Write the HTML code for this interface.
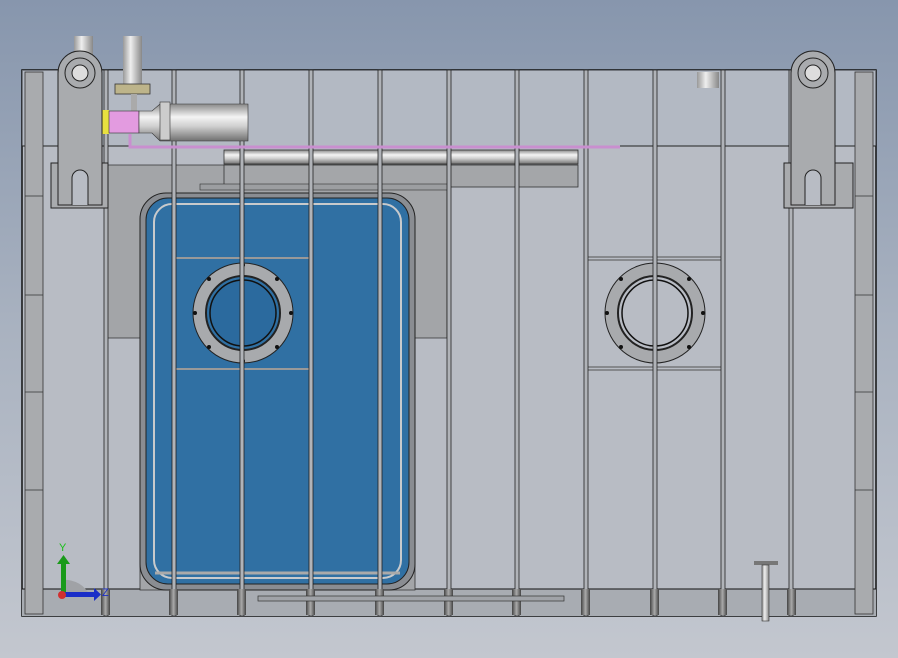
<!DOCTYPE html>
<html><head><style>
html,body{margin:0;padding:0;width:898px;height:658px;overflow:hidden}
</style></head><body>
<svg width="898" height="658" viewBox="0 0 898 658" xmlns="http://www.w3.org/2000/svg">
<defs>
<linearGradient id="bg" x1="0" y1="0" x2="0" y2="1">
<stop offset="0" stop-color="#8796ad"/><stop offset="0.5" stop-color="#a9b2c0"/><stop offset="1" stop-color="#c3c7cf"/>
</linearGradient>
<linearGradient id="cyl" x1="0" y1="0" x2="0" y2="1">
<stop offset="0" stop-color="#8a8a8a"/><stop offset="0.35" stop-color="#f4f4f4"/><stop offset="0.6" stop-color="#d0d0d0"/><stop offset="1" stop-color="#707070"/>
</linearGradient>
<linearGradient id="cylv" x1="0" y1="0" x2="1" y2="0">
<stop offset="0" stop-color="#999"/><stop offset="0.4" stop-color="#eee"/><stop offset="1" stop-color="#888"/>
</linearGradient>
<linearGradient id="post" x1="0" y1="0" x2="1" y2="0">
<stop offset="0" stop-color="#444"/><stop offset="0.5" stop-color="#aaa"/><stop offset="1" stop-color="#444"/>
</linearGradient>
</defs>
<rect width="898" height="658" fill="url(#bg)"/>
<rect x="22" y="70" width="854" height="546" fill="#b8bcc4" stroke="#111" stroke-width="1.5"/>
<rect x="22" y="70" width="854" height="76" fill="#adb5c2" opacity="0.5"/>
<line x1="22" y1="146" x2="876" y2="146" stroke="#222"/>
<rect x="22" y="589" width="854" height="27" fill="#a8acb2"/>
<line x1="22" y1="589" x2="876" y2="589" stroke="#111"/>
<rect x="25" y="72" width="18" height="542" fill="#a9abae" stroke="#333" stroke-width="0.8"/>
<rect x="855" y="72" width="18" height="542" fill="#a9abae" stroke="#333" stroke-width="0.8"/>
<g stroke="#333" stroke-width="0.8">
<line x1="25" y1="196" x2="43" y2="196"/><line x1="25" y1="295" x2="43" y2="295"/><line x1="25" y1="392" x2="43" y2="392"/><line x1="25" y1="490" x2="43" y2="490"/>
<line x1="855" y1="196" x2="873" y2="196"/><line x1="855" y1="295" x2="873" y2="295"/><line x1="855" y1="392" x2="873" y2="392"/><line x1="855" y1="490" x2="873" y2="490"/>
</g>
<path d="M106 165 H447 V338 H415 V590 H140 V338 H106 Z" fill="#a3a5a8" stroke="#333" stroke-width="0.8"/>
<rect x="224" y="150" width="354" height="14" fill="url(#cyl)" stroke="#333" stroke-width="0.8"/>
<rect x="224" y="165" width="354" height="22" fill="#a4a6a9" stroke="#333" stroke-width="0.8"/>
<rect x="200" y="184" width="250" height="6" fill="#9c9ea1" stroke="#333" stroke-width="0.6"/>
<rect x="140" y="193" width="275" height="397" rx="26" fill="#8a8d92" stroke="#222"/>
<rect x="146" y="198" width="263" height="386" rx="22" fill="#3070a3" stroke="#222"/>
<rect x="154" y="204" width="247" height="374" rx="18" fill="none" stroke="#c8cacc" stroke-width="2"/>
<rect x="174" y="258" width="137" height="111" fill="none" stroke="#999" stroke-width="2"/>
<line x1="155" y1="573" x2="400" y2="573" stroke="#aaa" stroke-width="3"/>
<circle cx="243" cy="313" r="50" fill="#a8aaad" stroke="#222"/>
<circle cx="243" cy="313" r="37" fill="#3070a3" stroke="#222" stroke-width="2"/>
<circle cx="243" cy="313" r="33" fill="#2b6a9e" stroke="#111" stroke-width="1.5"/>
<circle cx="655" cy="313" r="50" fill="#a8aaad" stroke="#222"/>
<circle cx="655" cy="313" r="37" fill="#b8bcc4" stroke="#222" stroke-width="2"/>
<circle cx="655" cy="313" r="33" fill="#b8bcc4" stroke="#111" stroke-width="1.5"/>
<g fill="#111">
<circle cx="243" cy="265" r="2"/><circle cx="243" cy="361" r="2"/><circle cx="195" cy="313" r="2"/><circle cx="291" cy="313" r="2"/>
<circle cx="209" cy="279" r="2"/><circle cx="277" cy="279" r="2"/><circle cx="209" cy="347" r="2"/><circle cx="277" cy="347" r="2"/>
<circle cx="655" cy="265" r="2"/><circle cx="655" cy="361" r="2"/><circle cx="607" cy="313" r="2"/><circle cx="703" cy="313" r="2"/>
<circle cx="621" cy="279" r="2"/><circle cx="689" cy="279" r="2"/><circle cx="621" cy="347" r="2"/><circle cx="689" cy="347" r="2"/>
</g>
<g stroke="#555" stroke-width="1"><line x1="586" y1="257" x2="723" y2="257"/><line x1="586" y1="260" x2="723" y2="260"/>
<line x1="586" y1="367" x2="723" y2="367"/><line x1="586" y1="370" x2="723" y2="370"/></g>
<g fill="#b0b3b8" stroke="#222" stroke-width="0.8">
<rect x="104" y="70" width="4" height="546"/><rect x="172" y="70" width="4" height="546"/><rect x="240" y="70" width="4" height="546"/>
<rect x="309" y="70" width="4" height="546"/><rect x="378" y="70" width="4" height="546"/><rect x="447" y="70" width="4" height="546"/>
<rect x="515" y="70" width="4" height="546"/><rect x="584" y="70" width="4" height="546"/><rect x="653" y="70" width="4" height="546"/>
<rect x="721" y="70" width="4" height="546"/><rect x="789" y="70" width="4" height="546"/>
</g>
<g fill="url(#post)">
<rect x="101" y="589" width="9" height="26"/><rect x="169" y="589" width="9" height="26"/><rect x="237" y="589" width="9" height="26"/>
<rect x="306" y="589" width="9" height="26"/><rect x="375" y="589" width="9" height="26"/><rect x="444" y="589" width="9" height="26"/>
<rect x="512" y="589" width="9" height="26"/><rect x="581" y="589" width="9" height="26"/><rect x="650" y="589" width="9" height="26"/>
<rect x="718" y="589" width="9" height="26"/><rect x="787" y="589" width="9" height="26"/>
</g>
<rect x="258" y="596" width="306" height="5" fill="#a0a3a8" stroke="#333" stroke-width="0.7"/>
<rect x="754" y="561" width="24" height="4" fill="#777"/>
<rect x="762" y="565" width="7" height="56" fill="url(#cylv)" stroke="#333" stroke-width="0.6"/>
<rect x="74" y="36" width="19" height="30" fill="url(#cylv)"/>
<rect x="123" y="36" width="19" height="50" fill="url(#cylv)"/>
<rect x="115" y="84" width="35" height="10" fill="#bdb48a" stroke="#333" stroke-width="0.8"/>
<rect x="131" y="94" width="6" height="18" fill="#aaa"/>
<rect x="101" y="110" width="8" height="24" fill="#e8e040"/>
<rect x="109" y="111" width="30" height="22" fill="#e39be0" stroke="#333" stroke-width="0.6"/>
<path d="M139 111 H152 L160 104 H248 V141 H160 L152 133 H139 Z" fill="url(#cyl)" stroke="#333" stroke-width="0.6"/>
<rect x="160" y="102" width="10" height="38" fill="#ccc" stroke="#333" stroke-width="0.6"/>
<path d="M130 134 V147 H620" fill="none" stroke="#c98fcf" stroke-width="3"/>
<rect x="697" y="72" width="22" height="16" fill="url(#cylv)"/>
<g fill="#a9abae" stroke="#222" stroke-width="1">
<rect x="51" y="163" width="57" height="45"/>
<path d="M58 73 A22 22 0 0 1 102 73 V205 H58 Z"/>
<rect x="784" y="163" width="69" height="45"/>
<path d="M791 73 A22 22 0 0 1 835 73 V205 H791 Z"/>
<path d="M72 205 V178 A8 8 0 0 1 88 178 V205" fill="#b8bcc4"/>
<path d="M805 205 V178 A8 8 0 0 1 821 178 V205" fill="#b8bcc4"/>
<circle cx="80" cy="73" r="15" fill="none"/><circle cx="80" cy="73" r="8" fill="#ddd"/>
<circle cx="813" cy="73" r="15" fill="none"/><circle cx="813" cy="73" r="8" fill="#ddd"/>
</g>
<path d="M63 596 L63 580 A27 27 0 0 1 90 596 Z" fill="#a0a2a6"/>
<rect x="61" y="562" width="5" height="34" fill="#1a9a1a"/>
<path d="M57 564 L63.5 555 L70 564 Z" fill="#1a9a1a"/>
<rect x="63" y="592" width="33" height="5" fill="#1a2ec8"/>
<path d="M94 588 L101 594.5 L94 601 Z" fill="#1a2ec8"/>
<circle cx="62" cy="595" r="4" fill="#d03030"/>
<text x="59" y="551" font-family="Liberation Sans, sans-serif" font-size="11" fill="#18c018">Y</text>
<text x="102" y="596" font-family="Liberation Sans, sans-serif" font-size="11" fill="#1a2ec8">Z</text>
</svg>
</body></html>
